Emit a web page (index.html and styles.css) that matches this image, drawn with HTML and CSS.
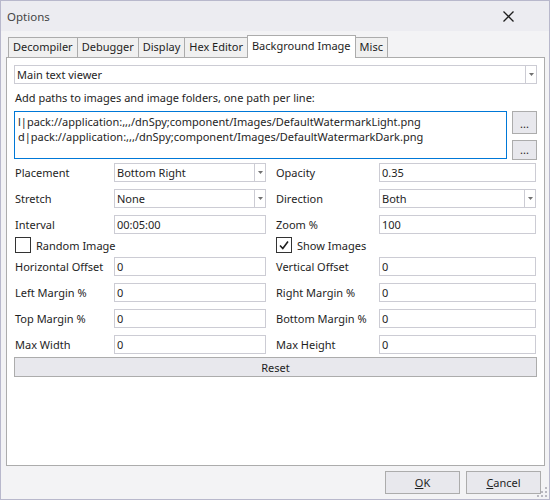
FILE: index.html
```html
<!DOCTYPE html>
<html>
<head>
<meta charset="utf-8">
<title>Options</title>
<link rel="stylesheet" href="styles.css">
</head>
<body>
<div class="window">
  <div class="titlebar">
    <span class="title">Options</span>
    <svg class="close" width="11" height="11" viewBox="0 0 11 11"><path d="M0.5 0.5 L10.5 10.5 M10.5 0.5 L0.5 10.5" stroke="#1e1e1e" stroke-width="1.3" fill="none"/></svg>
  </div>
  <div class="main">
    <div class="tabs">
      <div class="tab">Decompiler</div>
      <div class="tab">Debugger</div>
      <div class="tab">Display</div>
      <div class="tab">Hex Editor</div>
      <div class="tab active">Background Image</div>
      <div class="tab">Misc</div>
    </div>
    <div class="panel">
      <div class="field combo top-combo"><span class="val">Main text viewer</span><span class="drop"><svg width="7" height="4" viewBox="0 0 7 4"><path d="M0 0 H7 L3.5 4 Z" fill="#717171"/></svg></span></div>
      <div class="hint">Add paths to images and image folders, one path per line:</div>
      <div class="paths">
        <div class="textarea">l|pack://application:,,,/dnSpy;component/Images/DefaultWatermarkLight.png<br>d|pack://application:,,,/dnSpy;component/Images/DefaultWatermarkDark.png</div>
        <div class="browse">
          <div class="btn dots b1">...</div>
          <div class="btn dots b2">...</div>
        </div>
      </div>
      <div class="grid">
        <div class="lbl">Placement</div>
        <div class="field combo"><span class="val">Bottom Right</span><span class="drop"><svg width="7" height="4" viewBox="0 0 7 4"><path d="M0 0 H7 L3.5 4 Z" fill="#717171"/></svg></span></div>
        <div class="lbl r">Opacity</div>
        <div class="field"><span class="val">0.35</span></div>

        <div class="lbl">Stretch</div>
        <div class="field combo"><span class="val">None</span><span class="drop"><svg width="7" height="4" viewBox="0 0 7 4"><path d="M0 0 H7 L3.5 4 Z" fill="#717171"/></svg></span></div>
        <div class="lbl r">Direction</div>
        <div class="field combo"><span class="val">Both</span><span class="drop"><svg width="7" height="4" viewBox="0 0 7 4"><path d="M0 0 H7 L3.5 4 Z" fill="#717171"/></svg></span></div>

        <div class="lbl">Interval</div>
        <div class="field"><span class="val">00:05:00</span></div>
        <div class="lbl r">Zoom %</div>
        <div class="field"><span class="val">100</span></div>

        <div class="check"><span class="box"></span><span>Random Image</span></div>
        <div class="check r"><span class="box"><svg width="14" height="14" viewBox="0 0 14 14"><path d="M3 7.5 L5.8 10.5 L11 3.5" stroke="#1e1e1e" stroke-width="1.6" fill="none"/></svg></span><span>Show Images</span></div>

        <div class="lbl">Horizontal Offset</div>
        <div class="field"><span class="val">0</span></div>
        <div class="lbl r">Vertical Offset</div>
        <div class="field"><span class="val">0</span></div>

        <div class="lbl">Left Margin %</div>
        <div class="field"><span class="val">0</span></div>
        <div class="lbl r">Right Margin %</div>
        <div class="field"><span class="val">0</span></div>

        <div class="lbl">Top Margin %</div>
        <div class="field"><span class="val">0</span></div>
        <div class="lbl r">Bottom Margin %</div>
        <div class="field"><span class="val">0</span></div>

        <div class="lbl">Max Width</div>
        <div class="field"><span class="val">0</span></div>
        <div class="lbl r">Max Height</div>
        <div class="field"><span class="val">0</span></div>
      </div>
      <div class="btn reset">Reset</div>
    </div>
    <div class="footer">
      <div class="btn dlg"><u>O</u>K</div>
      <div class="btn dlg"><u>C</u>ancel</div>
    </div>
  </div>
  <svg class="grip" width="12" height="12" viewBox="0 0 12 12">
    <rect x="9" y="1" width="2" height="2" fill="#b9b9c0"/>
    <rect x="9" y="5" width="2" height="2" fill="#b9b9c0"/>
    <rect x="5" y="5" width="2" height="2" fill="#b9b9c0"/>
    <rect x="9" y="9" width="2" height="2" fill="#b9b9c0"/>
    <rect x="5" y="9" width="2" height="2" fill="#b9b9c0"/>
    <rect x="1" y="9" width="2" height="2" fill="#b9b9c0"/>
  </svg>
</div>
</body>
</html>
```
FILE: styles.css
```css
* { box-sizing: border-box; }
html, body { margin: 0; padding: 0; }
body {
  font-family: "Noto Sans", "Liberation Sans", sans-serif;
  font-size: 11px;
  color: #1e1e1e;
  background: #f3f3f5;
}
.window {
  position: relative;
  width: 550px;
  height: 500px;
  border: 1px solid #b8b8cc;
  background: #f3f3f5;
  display: flex;
  flex-direction: column;
}
.titlebar {
  height: 30px;
  flex: none;
  background: #ececf1;
  display: flex;
  align-items: center;
  justify-content: space-between;
  padding: 0 35px 0 6px;
}
.title { color: #444; font-size: 11.5px; }
.close { display: block; }
.main {
  flex: 1;
  display: flex;
  flex-direction: column;
  padding: 4px 4px 0 5px;
}
.tabs {
  display: flex;
  align-items: flex-end;
  height: 22px;
  padding-left: 2px;
  position: relative;
  z-index: 1;
}
.tab {
  height: 20px;
  line-height: 18px;
  padding: 0 4px;
  border: 1px solid #acacac;
  border-bottom: none;
  background: #f0f0f0;
  margin-left: -1px;
  white-space: nowrap;
}
.tab:first-child { margin-left: 0; }
.tab.active {
  height: 23px;
  margin-bottom: -1px;
  background: #fff;
  line-height: 19px;
  padding: 0 4px;
  position: relative;
}
.panel {
  flex: none;
  height: 409px;
  background: #fff;
  border: 1px solid #acacac;
  padding: 7px 7px 0 7px;
  display: flex;
  flex-direction: column;
}
.field {
  height: 19px;
  border: 1px solid #ccccd4;
  background: #fff;
  display: flex;
  align-items: center;
  padding-left: 2px;
  white-space: nowrap;
  overflow: hidden;
}
.field .val { flex: 1; }
.combo .drop {
  width: 11px;
  height: 100%;
  border-left: 1px solid #ccccd4;
  display: flex;
  align-items: center;
  justify-content: center;
  flex: none;
}
.combo .drop svg { display: block; width: 5px; height: 3px; }
.top-combo { flex: none; }
.hint {
  height: 27px;
  line-height: 27px;
  padding-left: 1px;
  flex: none;
}
.paths {
  display: flex;
  gap: 5px;
  height: 49px;
  flex: none;
}
.textarea {
  flex: 1;
  height: 48px;
  border: 1px solid #0078d7;
  padding: 2px 3px;
  line-height: 15px;
  white-space: nowrap;
  overflow: hidden;
}
.browse {
  width: 25px;
  display: flex;
  flex-direction: column;
  gap: 6px;
}
.btn {
  background: #e8e8ed;
  border: 1px solid #acacac;
  display: flex;
  align-items: center;
  justify-content: center;
}
.dots { line-height: 1; align-items: flex-end; padding-bottom: 4px; font-size: 11px; }
.b1 { height: 24px; }
.b2 { height: 20px; }
.grid {
  margin-top: -1px;
  display: grid;
  grid-template-columns: 100px 152px 113px 157px;
  grid-template-rows: 26px 26px 26px 16px 26px 26px 26px 26px;
  align-items: center;
  flex: none;
}
.lbl { padding-left: 1px; white-space: nowrap; }
.lbl.r { padding-left: 10px; }
.check {
  grid-column: span 2;
  display: flex;
  align-items: center;
  gap: 5px;
  padding-left: 1px;
  height: 16px;
  white-space: nowrap;
}
.check.r { padding-left: 10px; }
.box {
  width: 16px;
  height: 16px;
  border: 1px solid #333;
  background: #fff;
  display: flex;
  align-items: center;
  justify-content: center;
  flex: none;
}
.box svg { display: block; }
.reset {
  height: 20px;
  flex: none;
}
.footer {
  display: flex;
  justify-content: flex-end;
  gap: 6px;
  padding: 5px 4px 0 0;
}
.dlg {
  width: 75px;
  height: 23px;
  background: #e8e8ed;
}
.dlg u { text-decoration: underline; }
.grip {
  position: absolute;
  right: 1px;
  bottom: 1px;
}
```
